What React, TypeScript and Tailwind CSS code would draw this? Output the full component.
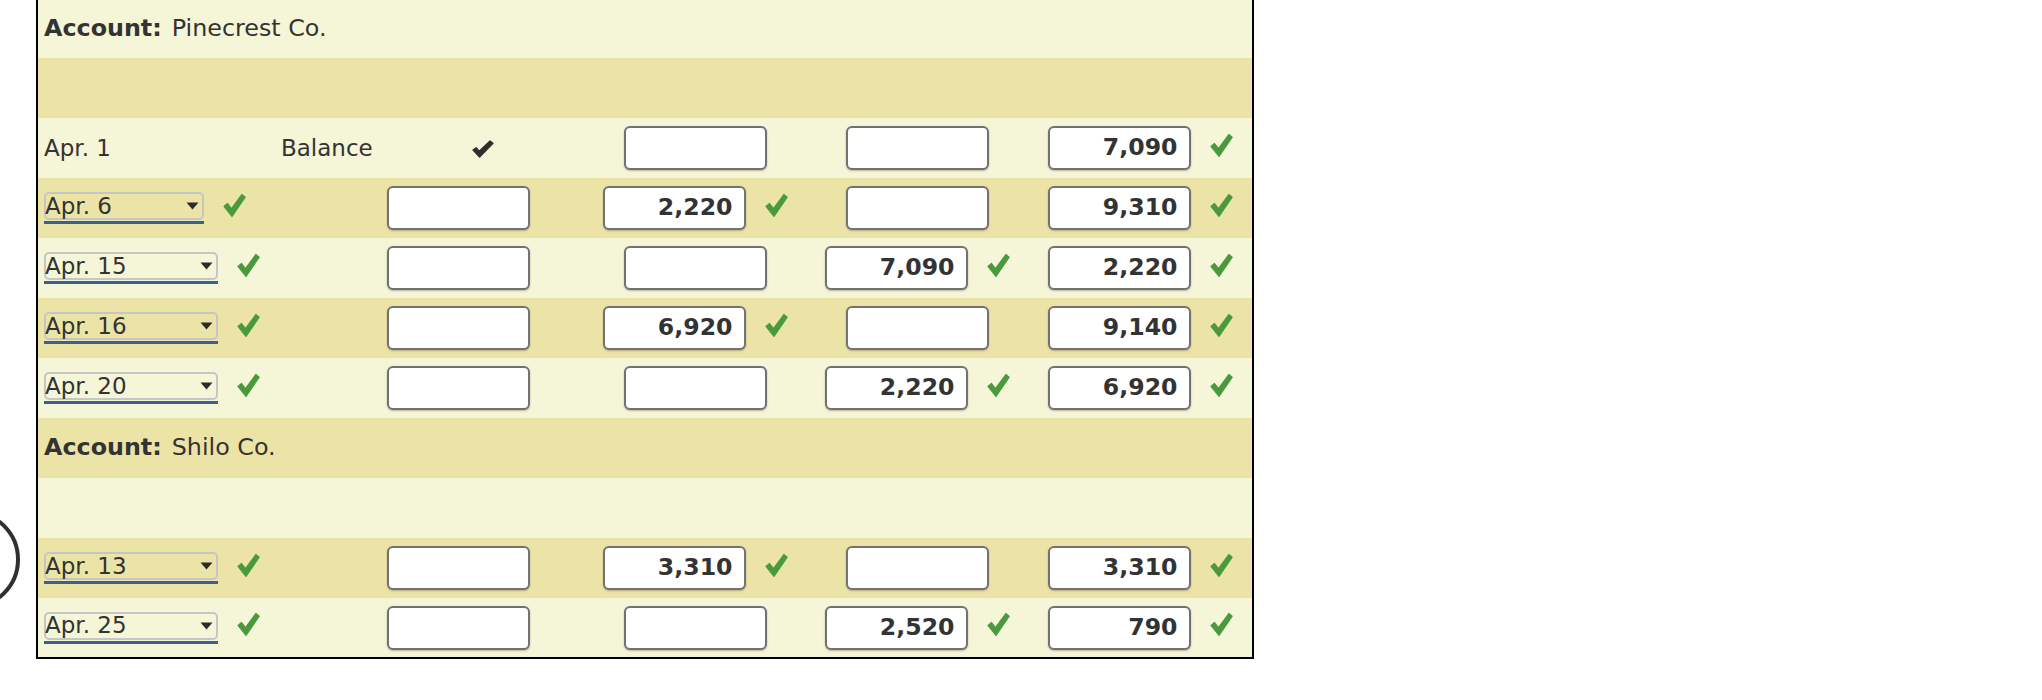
import React from 'react';

type Cell = { value?: string; ok?: boolean };

type Row =
  | { kind: 'account'; name: string; shade: 'light' | 'dark'; h: string }
  | { kind: 'blank'; shade: 'light' | 'dark'; h: string }
  | {
      kind: 'entry';
      shade: 'light' | 'dark';
      h: string;
      date: string;
      selectW?: string;
      item?: string;
      prCheck?: boolean;
      debit: Cell;
      credit: Cell;
      balance: Cell;
    };

const rows: Row[] = [
  { kind: 'account', name: 'Pinecrest Co.', shade: 'light', h: 'h-[58px]' },
  { kind: 'blank', shade: 'dark', h: 'h-[60px]' },
  {
    kind: 'entry',
    shade: 'light',
    h: 'h-[60px]',
    date: 'Apr. 1',
    item: 'Balance',
    prCheck: true,
    debit: {},
    credit: {},
    balance: { value: '7,090', ok: true },
  },
  {
    kind: 'entry',
    shade: 'dark',
    h: 'h-[60px]',
    date: 'Apr. 6',
    selectW: 'w-[160px]',
    debit: { value: '2,220', ok: true },
    credit: {},
    balance: { value: '9,310', ok: true },
  },
  {
    kind: 'entry',
    shade: 'light',
    h: 'h-[60px]',
    date: 'Apr. 15',
    selectW: 'w-[174px]',
    debit: {},
    credit: { value: '7,090', ok: true },
    balance: { value: '2,220', ok: true },
  },
  {
    kind: 'entry',
    shade: 'dark',
    h: 'h-[60px]',
    date: 'Apr. 16',
    selectW: 'w-[174px]',
    debit: { value: '6,920', ok: true },
    credit: {},
    balance: { value: '9,140', ok: true },
  },
  {
    kind: 'entry',
    shade: 'light',
    h: 'h-[60px]',
    date: 'Apr. 20',
    selectW: 'w-[174px]',
    debit: {},
    credit: { value: '2,220', ok: true },
    balance: { value: '6,920', ok: true },
  },
  { kind: 'account', name: 'Shilo Co.', shade: 'dark', h: 'h-[60px]' },
  { kind: 'blank', shade: 'light', h: 'h-[60px]' },
  {
    kind: 'entry',
    shade: 'dark',
    h: 'h-[60px]',
    date: 'Apr. 13',
    selectW: 'w-[174px]',
    debit: { value: '3,310', ok: true },
    credit: {},
    balance: { value: '3,310', ok: true },
  },
  {
    kind: 'entry',
    shade: 'light',
    h: 'h-[59px]',
    date: 'Apr. 25',
    selectW: 'w-[174px]',
    debit: {},
    credit: { value: '2,520', ok: true },
    balance: { value: '790', ok: true },
  },
];

function GreenCheck() {
  return (
    <svg width="24" height="25" viewBox="0 0 24 25" className="mb-[6px] shrink-0">
      <path
        d="M2 13.5 L5.5 10.5 L9.5 15.5 L19.8 1.5 L23.2 4.2 L10 23.5 Z"
        fill="#4a9a3d"
        stroke="#4a9a3d"
        strokeWidth="1.2"
        strokeLinejoin="round"
      />
    </svg>
  );
}

function HeavyCheck() {
  return (
    <svg width="22" height="18" viewBox="0 0 22 18">
      <path
        d="M1 10 L4.2 7.8 L7.2 11.2 L18 1 L21 3.3 L7.6 17 Z"
        fill="#2e2e2e"
        stroke="#2e2e2e"
        strokeWidth="1.3"
        strokeLinejoin="round"
      />
    </svg>
  );
}

function AmountBox({ value }: { value?: string }) {
  return (
    <div className="w-[143px] h-[44px] shrink-0 bg-white border-2 border-[#727272] rounded-[6px] shadow-[0_1px_2px_rgba(0,0,0,0.25)] flex items-center justify-end pr-[11px] text-[23.6px] font-bold text-[#333333]">
      {value}
    </div>
  );
}

function AmountCell({ cell }: { cell: Cell }) {
  return (
    <div className="flex items-center justify-center gap-[18px]">
      <AmountBox value={cell.value} />
      {cell.ok && <GreenCheck />}
    </div>
  );
}

function DateSelect({ label, width }: { label: string; width: string }) {
  return (
    <div className="flex items-center gap-[18px]">
      <div className="flex flex-col">
        <div
          className={`${width} h-[28px] border-2 border-[#c6c6c6] rounded-[5px] flex items-center justify-between pr-[3px] text-[23px] leading-none text-[#333333]`}
        >
          <span className="-ml-[1px]">{label}</span>
          <svg width="13" height="8" viewBox="0 0 13 8">
            <path d="M0.5 0.5 H12.5 L6.5 7.5 Z" fill="#2b2b2b" />
          </svg>
        </div>
        <div className={`${width} h-[3px] mt-[1px] bg-[#3a5f92]`} />
      </div>
      <GreenCheck />
    </div>
  );
}

export default function App() {
  return (
    <div className="relative w-[2042px] h-[700px] bg-white overflow-hidden font-['DejaVu_Sans','Verdana',sans-serif] text-[#333333]">
      {/* partial circle at the left edge */}
      <div className="absolute left-[-80px] top-[510px] w-[100px] h-[99px] rounded-full border-[4px] border-[#2f2f2f]" />

      <div className="ml-[36px] w-[1218px] border-l-2 border-r-2 border-b-2 border-black">
        {rows.map((row, i) => {
          const bg = row.shade === 'light' ? 'bg-[#f5f5d7]' : 'bg-[#ece4a7]';
          if (row.kind === 'account') {
            return (
              <div key={i} className={`${row.h} ${bg} flex items-center pl-[6px] text-[23.8px]`}>
                <span className="font-bold">Account:</span>
                <span className="ml-[10px]">{row.name}</span>
              </div>
            );
          }
          if (row.kind === 'blank') {
            return <div key={i} className={`${row.h} ${bg}`} />;
          }
          return (
            <div
              key={i}
              className={`${row.h} ${bg} grid grid-cols-[232px_107px_207px_222px_222px_224px] items-center text-[23px]`}
            >
              <div className="pl-[6px] flex items-center">
                {row.selectW ? <DateSelect label={row.date} width={row.selectW} /> : <span>{row.date}</span>}
              </div>
              <div className="pl-[11px]">{row.item}</div>
              <div className="flex items-center">
                {row.prCheck ? (
                  <div className="pl-[95px] pt-[2px]">
                    <HeavyCheck />
                  </div>
                ) : (
                  <div className="pl-[10px]">
                    <AmountBox />
                  </div>
                )}
              </div>
              <AmountCell cell={row.debit} />
              <AmountCell cell={row.credit} />
              <AmountCell cell={row.balance} />
            </div>
          );
        })}
      </div>
    </div>
  );
}
